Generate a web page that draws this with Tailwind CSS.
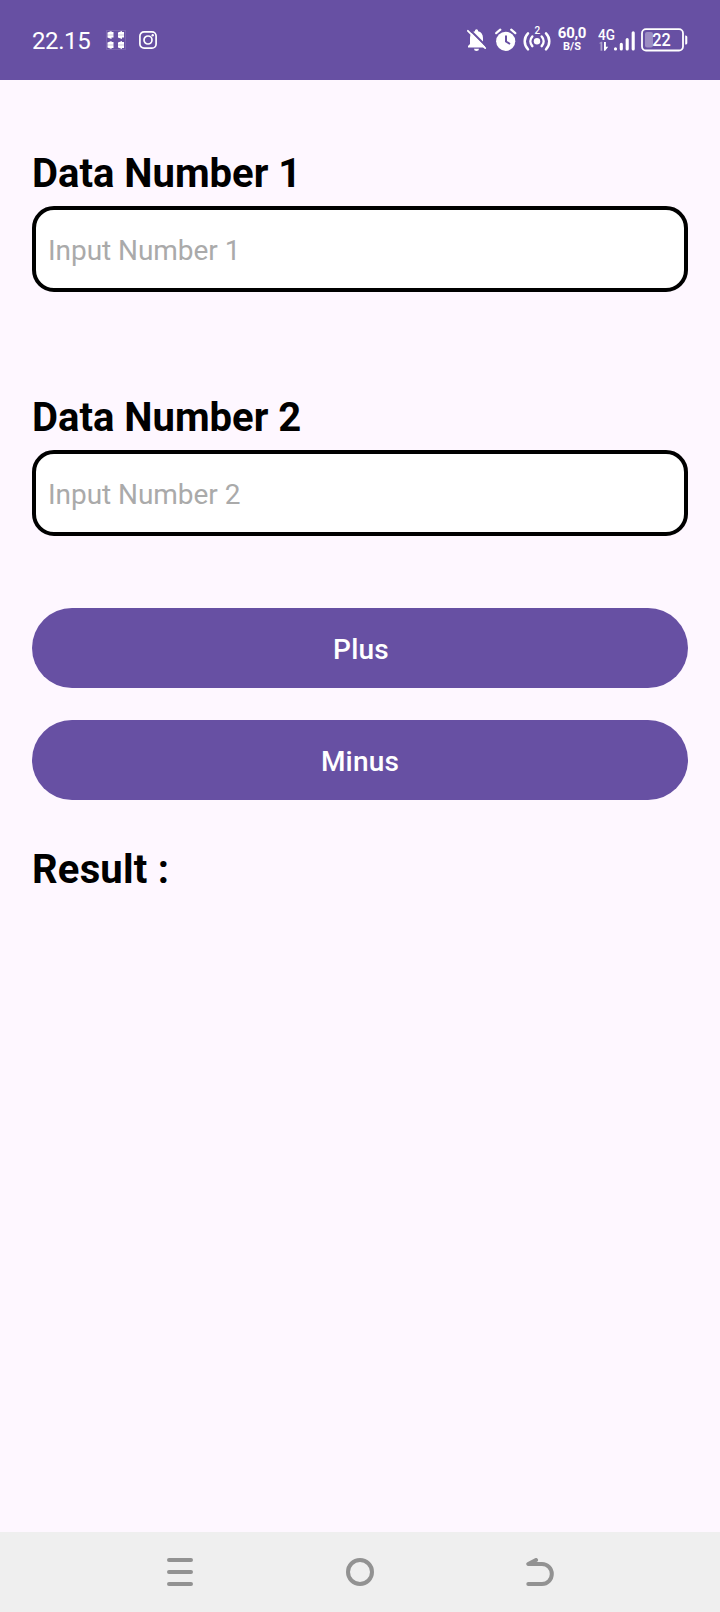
<!DOCTYPE html>
<html lang="en">
<head>
<meta charset="utf-8">
<title>Calculator</title>
<script src="https://cdn.jsdelivr.net/npm/@tailwindcss/browser@4"></script>
</head>
<body class="flex h-[1612px] w-[720px] flex-col bg-[#fef7ff] font-['Roboto',sans-serif] text-black">
<header class="flex h-20 shrink-0 items-center justify-between bg-[#6750a3] px-8 text-white">
  <div class="flex items-center">
    <span class="w-[74px] pt-0.5 text-[24px] leading-7 tracking-[-0.4px]">22.15</span>
    <svg class="h-5 w-5" viewBox="0 0 20 20" fill="#fff">
      <path d="M.5.5h19v19H.5z" fill="none" stroke="#fff" stroke-opacity=".13"/>
      <path d="M1.500 2.500l4-1.500v8l-4-1.500zM5 2h2.500v5.500H5zM12 2.500l4-1.500v8l-4-1.500zM15.500 2H18v5.500h-2.500zM1.500 12.500l4-1.500v8l-4-1.500zM5 12h2.500v6H5zM12 12.500l4-1.500v8l-4-1.500zM15.500 12H18v6h-2.500z"/>
      <path d="M1 5h7M11.500 5h7M1 15h7M11.500 15h7" stroke="#6750a3" stroke-width=".6" opacity=".5"/>
    </svg>
    <svg class="ml-[13px] h-[18px] w-[18px]" viewBox="0 0 18 18" fill="none" stroke="#fff" stroke-width="1.7">
      <rect x=".9" y=".9" width="16.2" height="16.2" rx="4.2"/><circle cx="9" cy="9" r="4"/><circle cx="13.7" cy="4.3" r="1.2" fill="#fff" stroke="none"/>
    </svg>
  </div>
  <div class="flex items-center">
    <svg class="h-7 w-[21px]" viewBox="0 0 21 28" fill="#fff">
      <path d="M1 21.500v-1.400l2-2.200v-6c0-3.500 1.800-5.900 4.900-6.600V4.900a1.600 1.600 0 0 1 3.200 0v.4c3.100.7 4.900 3.100 4.900 6.600v6l2 2.200v1.400zM7 22.800h5a2.500 2.300 0 0 1-5 0z"/>
      <path d="M1.800 2.800l18 18" stroke="#6750a3" stroke-width="2"/>
      <path d="M.9 4.800l17.300 17.300" stroke="#fff" stroke-width="1.800" stroke-linecap="round"/>
    </svg>
    <svg class="ml-[7px] h-7 w-[22px]" viewBox="0 0 22 28">
      <circle cx="10.700" cy="15.300" r="9.600" fill="#fff"/><path d="M1.200 7.200L5.300 3.700M20.300 7.200L16.200 3.700" stroke="#fff" stroke-width="2.200" stroke-linecap="round"/><path d="M11 9.500v6l4 2.500" fill="none" stroke="#6750a3" stroke-width="2"/>
    </svg>
    <svg class="ml-[6px] h-7 w-[28px]" viewBox="0 0 28 28" fill="none" stroke="#fff" stroke-width="2.500" stroke-linecap="round">
      <circle cx="14" cy="15.300" r="3.200" fill="#fff" stroke="none"/>
      <path d="M9.300 10.500c-2.500 2.800-2.500 6.800 0 9.600M18.700 10.500c2.500 2.800 2.500 6.800 0 9.600M5 7.300c-4.400 4.400-4.400 11.600 0 16M23 7.300c4.400 4.400 4.400 11.600 0 16"/>
      <text x="14.400" y="8" text-anchor="middle" font-family="Roboto" font-size="10" font-weight="500" fill="#fff" stroke="none">2</text>
    </svg>
    <div class="ml-[6px] flex w-[30px] flex-col items-center gap-px pb-[3px] font-bold">
      <span class="text-[15px] leading-[14px] tracking-[-0.3px]">60,0</span>
      <span class="text-[11px] leading-[11px]">B/S</span>
    </div>
    <svg class="ml-[11px] h-7 w-[38px]" viewBox="0 0 38 28" fill="#fff">
      <text x="0" y="14" font-family="Roboto" font-size="15" font-weight="500" textLength="17" lengthAdjust="spacingAndGlyphs">4G</text>
      <path d="M.8 17.300l2.500-1.600h1v9H2.500v-7.200z" opacity=".45"/><path d="M6 16h1.900v4.700h2.300L7.200 24.700H6z"/>
      <path d="M17.500 22.800v.2M23.300 18.300v4.700M29.200 13.500v9.500M35.200 6.800v16.200" stroke="#fff" stroke-width="3.100" stroke-linecap="round"/>
    </svg>
    <svg class="ml-[5px] h-7 w-[47px]" viewBox="0 0 47 28">
      <rect x="1" y="3.200" width="41" height="21.300" rx="4" fill="none" stroke="#fff" stroke-width="1.800"/>
      <rect x="4" y="6" width="8" height="15.600" rx="2" fill="#fff" opacity=".35"/>
      <path d="M44.200 9.500h.5q1.600 0 1.600 1.500v6q0 1.500-1.600 1.500h-.5z" fill="#fff"/>
      <text x="20.600" y="19.800" text-anchor="middle" font-family="Roboto" font-size="17.500" font-weight="500" textLength="18.500" lengthAdjust="spacingAndGlyphs" fill="#fff">22</text>
    </svg>
  </div>
</header>
<main class="flex grow flex-col px-8 pt-[70px]">
  <h2 class="text-[40px] leading-[48px] font-bold">Data Number 1</h2>
  <input class="mt-[8px] h-[86px] w-full rounded-[22px] border-4 border-black bg-white px-3 pt-0.5 text-[28px] tracking-[-0.05px] placeholder:text-[#aaa]" placeholder="Input Number 1">
  <h2 class="mt-[102px] text-[40px] leading-[48px] font-bold">Data Number 2</h2>
  <input class="mt-[8px] h-[86px] w-full rounded-[22px] border-4 border-black bg-white px-3 pt-0.5 text-[28px] tracking-[-0.05px] placeholder:text-[#aaa]" placeholder="Input Number 2">
  <button class="mt-[72px] h-20 rounded-full bg-[#6750a3] pt-1 pl-0.5 text-[28px] font-medium tracking-[0.2px] text-white">Plus</button>
  <button class="mt-8 h-20 rounded-full bg-[#6750a3] pt-1 text-[28px] font-medium tracking-[0.2px] text-white">Minus</button>
  <h2 class="mt-[46px] text-[40px] leading-[48px] font-bold tracking-[0.2px]">Result :</h2>
</main>
<nav class="flex h-20 shrink-0 items-center justify-between bg-[#efefef] px-[166px]">
  <svg class="h-7 w-7" viewBox="0 0 28 28" fill="none" stroke="#929292" stroke-width="4" stroke-linecap="round"><path d="M3 2h22M3 14h22M3 26h22"/></svg>
  <svg class="h-7 w-7" viewBox="0 0 28 28" fill="none" stroke="#929292" stroke-width="4"><circle cx="14" cy="14" r="12"/></svg>
  <svg class="h-7 w-7" viewBox="0 0 28 28" fill="none" stroke="#929292" stroke-width="4" stroke-linecap="round" stroke-linejoin="round"><path d="M10 2L2.300 6H16a9.800 10 0 0 1 0 20H2.300"/></svg>
</nav>
</body>
</html>
